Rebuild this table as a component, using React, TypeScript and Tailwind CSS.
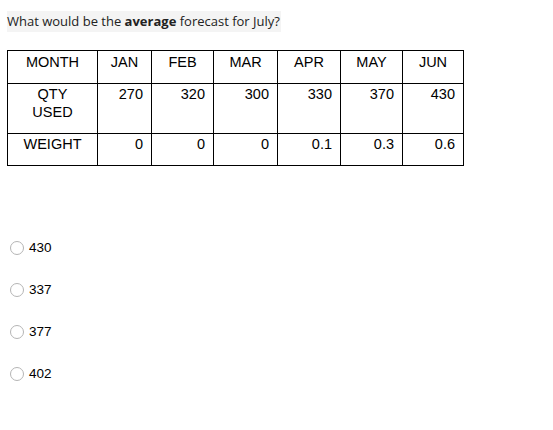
import React from "react";

const months = ["JAN", "FEB", "MAR", "APR", "MAY", "JUN"];
const qty = ["270", "320", "300", "330", "370", "430"];
const weight = ["0", "0", "0", "0.1", "0.3", "0.6"];
const widths = ["w-[54px]", "w-[62px]", "w-[64px]", "w-[63px]", "w-[62px]", "w-[61px]"];
const options = ["430", "337", "377", "402"];

export default function App() {
  return (
    <div className="w-[553px] h-[430px] bg-white px-[7px] pt-[9px] font-['Liberation_Sans',Arial,sans-serif] text-black">
      <div className="inline-block h-[21px] bg-[#f4f4f4] pr-[1px] font-['Open_Sans',sans-serif] text-[13px] leading-[21px] text-[#222]">
        What would be the <b>average</b> forecast for July?
      </div>

      <table className="mt-[17px] border-collapse text-[14.5px] leading-[18px]">
        <tbody>
          <tr className="h-[33px]">
            <td className="w-[90px] border border-black pt-[2px] text-center align-top">MONTH</td>
            {months.map((m, i) => (
              <td key={m} className={`${widths[i]} border border-black pt-[2px] text-center align-top`}>
                {m}
              </td>
            ))}
          </tr>
          <tr className="h-[50px]">
            <td className="border border-black pt-[1px] text-center align-top">
              QTY
              <br />
              USED
            </td>
            {qty.map((q, i) => (
              <td key={i} className="border border-black pr-[8px] pt-[1px] text-right align-top">
                {q}
              </td>
            ))}
          </tr>
          <tr className="h-[32px]">
            <td className="border border-black pt-[1px] text-center align-top">WEIGHT</td>
            {weight.map((w, i) => (
              <td key={i} className="border border-black pr-[8px] pt-[1px] text-right align-top">
                {w}
              </td>
            ))}
          </tr>
        </tbody>
      </table>

      <div className="mt-[61px] flex flex-col">
        {options.map((o) => (
          <label key={o} className="flex h-[42px] items-center gap-[5px] pl-[3px] text-[13.5px]">
            <span className="h-[14px] w-[14px] rounded-full border border-[#b5b5b5] bg-white" />
            <span>{o}</span>
          </label>
        ))}
      </div>
    </div>
  );
}
